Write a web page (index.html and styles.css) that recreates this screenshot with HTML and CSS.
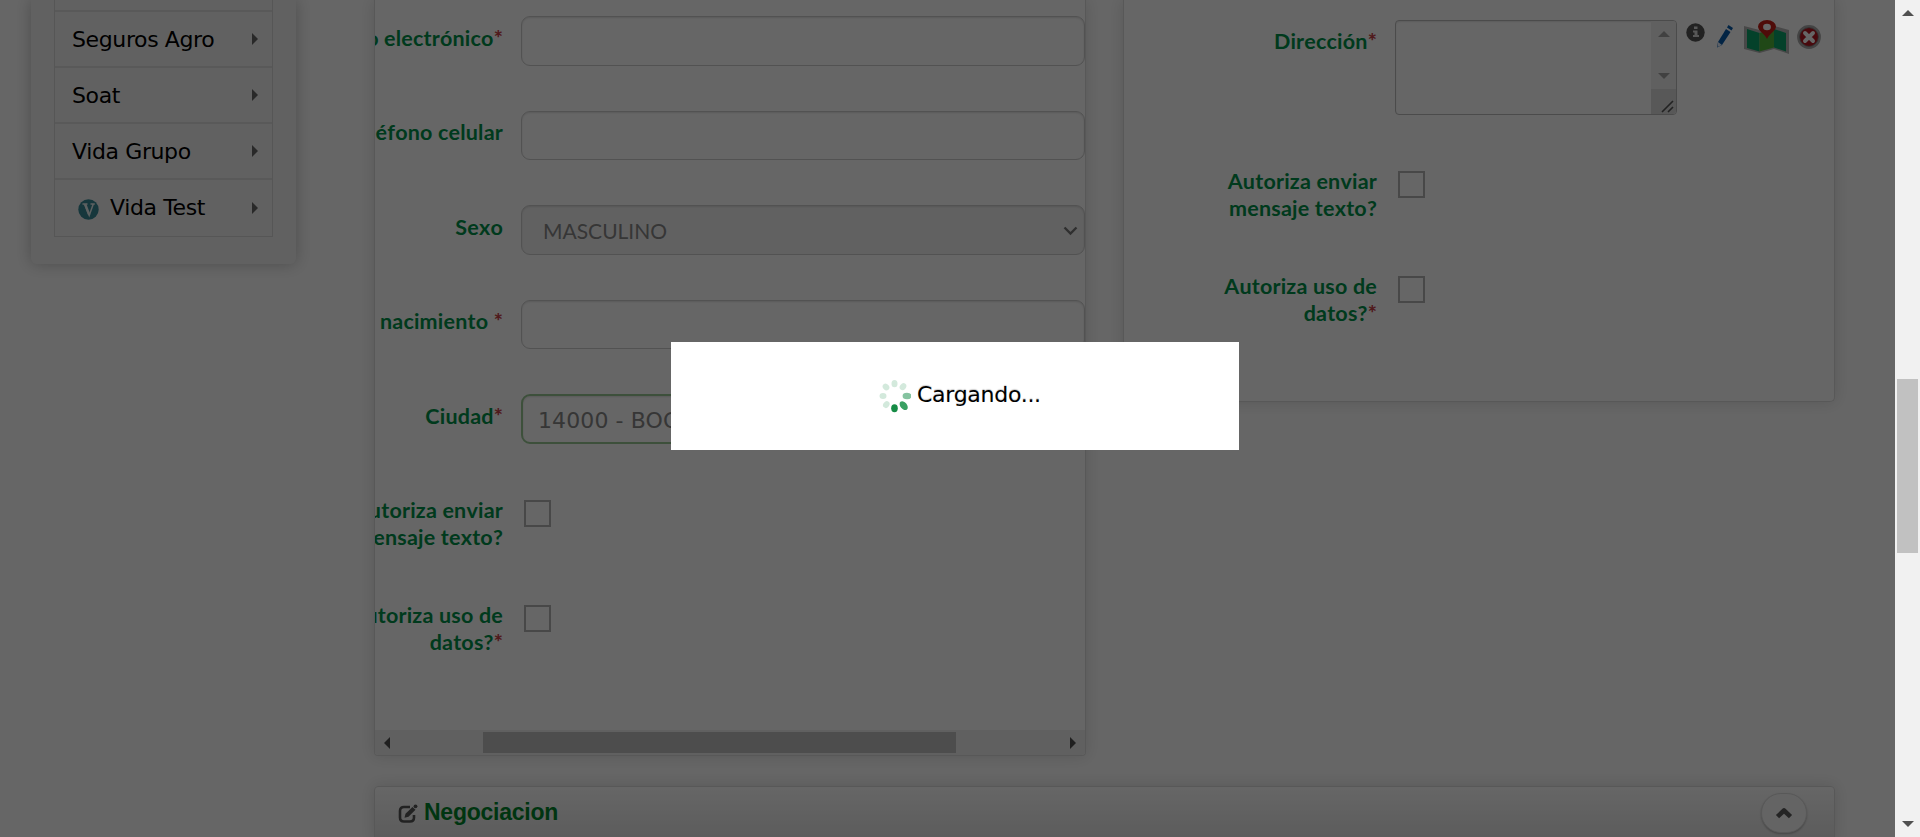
FILE: index.html
```html
<!DOCTYPE html>
<html lang="es">
<head>
<meta charset="utf-8">
<title>Negociacion</title>
<link rel="stylesheet" href="styles.css">
</head>
<body>
<div class="app">
  <div class="page">
    <aside class="sidebar">
      <ul class="menu">
        <li class="stub"></li>
        <li><span>Seguros Agro</span><i class="caret"></i></li>
        <li><span>Soat</span><i class="caret"></i></li>
        <li><span>Vida Grupo</span><i class="caret"></i></li>
        <li class="last"><svg class="badge" width="21" height="21" viewBox="0 0 21 21"><circle cx="10.5" cy="10.5" r="10.2" fill="#398a97"/><path d="M4.500 5h5M12.500 5h4.300M6.600 5l4.600 11.500L15.300 5" fill="none" stroke="#e8f2f2" stroke-width="1.500"/><path d="M7.200 5.200l4 10.500" stroke="#e8f2f2" stroke-width="2.400"/></svg><span>Vida Test</span><i class="caret"></i></li>
      </ul>
    </aside>
    <main class="main">
      <div class="columns">
        <section class="panel panel-left">
          <div class="form">
            <div class="row"><label><span class="nw">Correo electrónico<b>*</b></span></label><div class="input tall"></div></div>
            <div class="row short"><label><span class="nw">Teléfono celular</span></label><div class="input"></div></div>
            <div class="row"><label>Sexo</label><div class="input tall select"><span>MASCULINO</span><svg width="15" height="10" viewBox="0 0 15 10"><path d="M1.500 1.500l6 6 6-6" fill="none" stroke="#777" stroke-width="2.400"/></svg></div></div>
            <div class="row short"><label><span class="nw">Fecha nacimiento <b>*</b></span></label><div class="input"></div></div>
            <div class="row"><label>Ciudad<b>*</b></label><div class="input tall valid">14000 - BOGOTA</div></div>
            <div class="row check"><label><span class="nw">Autoriza enviar<br>mensaje texto?</span></label><div class="box"></div></div>
            <div class="row check"><label><span class="nw">Autoriza uso de<br>datos?<b>*</b></span></label><div class="box"></div></div>
          </div>
          <div class="hscroll"><i class="arrow-left"></i><div class="hthumb"></div><i class="arrow-right"></i></div>
        </section>
        <section class="panel panel-right">
          <div class="address">
            <label>Dirección<b>*</b></label>
            <div class="textarea"><div class="tscroll"><i class="up"></i><i class="down"></i><svg width="25" height="25" viewBox="0 0 25 25"><path d="M11 23L22 12M17 23l5-5" stroke="#555" stroke-width="1.600"/></svg></div></div>
            <svg class="icons" width="140" height="40" viewBox="0 0 140 40">
              <circle cx="13.500" cy="17.500" r="9.200" fill="#555"/>
              <path d="M12 11.500h3.500v2.500H12zM11 15.500h4.500v4.500h1.500v2h-6v-2h1.500v-2.500H11z" fill="#ddd"/>
              <path d="M36 27l8-13 4.500 3-8.500 13-5 2.500z" fill="#075aaa"/><path d="M45 12.500l1.500-2.500 4.500 3-1.500 2.500z" fill="#075aaa"/><path d="M36 27l4 3-4.500 2z" fill="#e8f0ff"/>
              <path d="M62 11l15.500 4L92 11l15 4v24l-15-5-14.500 4L62 34z" fill="#b4b4b4"/>
              <path d="M65 14l12.500 4v18.500L65 33z" fill="#0ba26a"/><path d="M77.500 18L92 14v18.500l-14.500 4z" fill="#52b33b"/><path d="M92 14l12 4v18.500l-12-4z" fill="#0ba26a"/>
              <path d="M85 24c-2-5-9-8-9-12.500a9 6.500 0 0118 0C94 16 87 19 85 24z" fill="#c62018"/><ellipse cx="85" cy="12" rx="3.900" ry="3.200" fill="#fff"/>
              <circle cx="127" cy="22" r="10.600" fill="#b51822" stroke="#aaa" stroke-width="2.600"/><circle cx="127" cy="22" r="9.400" fill="none" stroke="#777" stroke-width=".8"/>
              <path d="M123 18l8 8M131 18l-8 8" stroke="#fff" stroke-width="3.900" stroke-linecap="round"/>
            </svg>
          </div>
          <div class="row check"><label><span>Autoriza enviar<br>mensaje texto?</span></label><div class="box"></div></div>
          <div class="row check"><label><span>Autoriza uso de<br>datos?<b>*</b></span></label><div class="box"></div></div>
        </section>
      </div>
      <section class="panel panel-bottom">
        <svg class="edit" width="20" height="20" viewBox="0 0 20 20"><path d="M12 3H6Q2 3 2 7v6.500Q2 17.500 6 17.500h6q4 0 4-4V11" fill="none" stroke="#555" stroke-width="2.600"/><path d="M6.500 13.800l1-4L14.500 3l3 2.800-7 7z" fill="#555"/><circle cx="17.500" cy="2.300" r="1.900" fill="#555"/></svg>
        <h2><span>Negociacion</span></h2>
        <div class="collapse"><svg width="18" height="13" viewBox="0 0 18 13"><path d="M2.500 9.700L9 3.500l6.500 6.200" fill="none" stroke="#5a5a5a" stroke-width="4.600" stroke-linejoin="round"/></svg></div>
      </section>
    </main>
  </div>
  <div class="vscroll"><i class="up"></i><div class="vthumb"></div><i class="down"></i></div>
</div>
<div class="overlay"><div class="modal">
  <svg width="32" height="34" viewBox="0 0 32 34"><g fill="#d3e9dc"><ellipse cx="15.500" cy="4.700" rx="3" ry="3.600"/><ellipse cx="24" cy="7.700" rx="3" ry="3.700" transform="rotate(40 24 7.700)"/><ellipse cx="7" cy="8" rx="3" ry="3.700" transform="rotate(-40 7 8)"/><ellipse cx="4" cy="17" rx="3.500" ry="3"/><ellipse cx="7.300" cy="25.600" rx="3" ry="3.600" transform="rotate(40 7.300 25.600)"/></g><ellipse cx="28" cy="17" rx="4.400" ry="3.300" fill="#85c3a0"/><ellipse cx="24.700" cy="26.700" rx="3.300" ry="5" fill="#39a062" transform="rotate(-40 24.700 26.700)"/><ellipse cx="15.500" cy="29.300" rx="3.300" ry="4" fill="#168c46"/></svg>
  <span>Cargando...</span></div></div>
</body>
</html>
```
FILE: styles.css
```css
* { box-sizing: border-box; }
body { margin: 0; background: #fff; font-family: "DejaVu Sans", sans-serif; font-size: 22px; color: #000; overflow: hidden; }
.app { display: flex; height: 837px; overflow: hidden; }
.page { display: flex; align-items: flex-start; width: 1895px; height: 837px; overflow: hidden; padding-left: 31px; }
.sidebar { width: 265px; height: 264px; padding: 0 23px; background: #f3f3f3; border-radius: 0 0 6px 6px; box-shadow: 0 0 16px rgba(0,0,0,.25); flex: none; }
.menu { list-style: none; margin: 0; padding: 0; border: 1px solid #d8d8d8; border-top: 0; height: 237px; }
.menu li { display: flex; align-items: center; height: 56px; padding: 0 14px 0 17px; border-bottom: 2px solid #dedede; letter-spacing: -.38px; }
.menu li span { flex: 1; white-space: nowrap; }
.menu .stub { height: 12px; }
.menu .last { border: 0; height: 55px; }
.badge { margin: 3px 11px 0 6px; }
.caret { border-left: 6px solid #666; border-top: 6px solid transparent; border-bottom: 6px solid transparent; }
.main { margin-left: 78px; width: 1461px; flex: none; }
.columns { display: flex; justify-content: space-between; align-items: flex-start; height: 756px; }
.panel { border: 1px solid #dcdcdc; background: #fff; box-shadow: 0 0 16px rgba(0,0,0,.14); }
.panel-left { width: 712px; height: 756px; border-top: 0; border-radius: 0 0 4px 4px; overflow: hidden; }
.panel-right { width: 712px; height: 402px; border-top: 0; border-radius: 0 0 5px 5px; }
.form { display: grid; grid-template-rows: 95px 94px 95px 94px 106px 105px 105px; height: 730px; padding-top: 16px; }
.row { display: flex; align-items: flex-start; }
label { display: flex; justify-content: flex-end; width: 128px; margin-right: 18px; padding-top: 9px; flex: none; text-align: right; font: bold 21.5px/27px Lato, sans-serif; font-kerning: none; letter-spacing: .2px; color: #00914a; }
label b { color: #c84248; }
.short label { padding-top: 8px; }
.nw { white-space: nowrap; }
.input { width: 564px; height: 49px; border: 1px solid #ccc; border-radius: 9px; box-shadow: inset 0 1px 2px rgba(0,0,0,.12); flex: none; }
.input.tall { height: 50px; }
.select { display: flex; justify-content: space-between; align-items: center; padding: 1px 6px 0 21px; background: #f3f3f3; color: #888; font-family: Lato, sans-serif; font-size: 21px; }
.valid { border: 2px solid #99c894; padding: 0 15px; line-height: 49px; color: #888; white-space: nowrap; letter-spacing: .1px; }
.form .check label, .panel-right .check label { margin-top: -3px; margin-right: 21px; padding-top: 0; }
.box { width: 27px; height: 27px; border: 2px solid #b4b4b4; flex: none; }
.hscroll { display: flex; align-items: center; height: 25px; background: #f1f1f1; padding: 0 9px; }
.arrow-left { border-right: 6px solid #505050; border-top: 6px solid transparent; border-bottom: 6px solid transparent; }
.arrow-right { border-left: 6px solid #505050; border-top: 6px solid transparent; border-bottom: 6px solid transparent; margin-left: auto; }
.hthumb { width: 473px; height: 21px; margin-left: 93px; background: #c1c1c1; }
.address { display: flex; align-items: flex-start; height: 171px; padding-top: 20px; }
.panel-right label { width: 253px; }
.address label { padding-top: 8px; }
.textarea { display: flex; justify-content: flex-end; width: 282px; height: 95px; border: 1px solid #bbb; border-radius: 4px; box-shadow: inset 0 1px 2px rgba(0,0,0,.1); overflow: hidden; }
.tscroll { display: flex; flex-direction: column; align-items: center; width: 25px; height: 93px; padding-top: 10px; background: #f1f1f1; }
.up { border-bottom: 6px solid #505050; border-left: 6px solid transparent; border-right: 6px solid transparent; }
.down { border-top: 6px solid #505050; border-left: 6px solid transparent; border-right: 6px solid transparent; }
.tscroll .up { border-bottom-color: #a3a3a3; }
.tscroll .down { border-top-color: #a3a3a3; margin: 36px 0 10px; }
.tscroll svg { background: #dcdcdc; flex: none; }
.icons { margin: -5px 0 0 5px; }
.panel-right .check { height: 105px; }
.panel-bottom { display: flex; align-items: flex-start; margin-top: 30px; height: 56px; padding: 0 27px 0 23px; border-radius: 4px 4px 0 0; background: linear-gradient(#fff, #e4e4e4); }
.edit { margin: 17px 6px 0 0; }
h2 { margin: 11px 0 0; font: bold 23px/28px "Liberation Sans", sans-serif; letter-spacing: -.25px; color: #00852b; }
.collapse { display: flex; align-items: center; justify-content: center; width: 46px; height: 40px; margin: 6px 0 0 auto; border: 1px solid #ddd; border-radius: 20px; background: #fafafa; box-shadow: 0 1px 2px rgba(0,0,0,.25); }
.vscroll { display: flex; flex-direction: column; align-items: center; width: 25px; height: 837px; padding: 10px 0; background: #f1f1f1; position: relative; z-index: 3; }
.vthumb { width: 21px; height: 174px; margin-top: 363px; background: #c1c1c1; }
.vscroll .down { margin-top: auto; }
.overlay { position: absolute; left: 0; top: 0; width: 1895px; height: 837px; background: rgba(0,0,0,.6); z-index: 2; }
.modal { position: absolute; left: 671px; top: 342px; width: 568px; height: 108px; background: #fff; display: flex; align-items: flex-start; padding: 37px 0 0 208px; line-height: 32px; }
.modal span { margin-left: 6px; letter-spacing: -.28px; text-shadow: 0 -1px 1px #ccc; }
```
